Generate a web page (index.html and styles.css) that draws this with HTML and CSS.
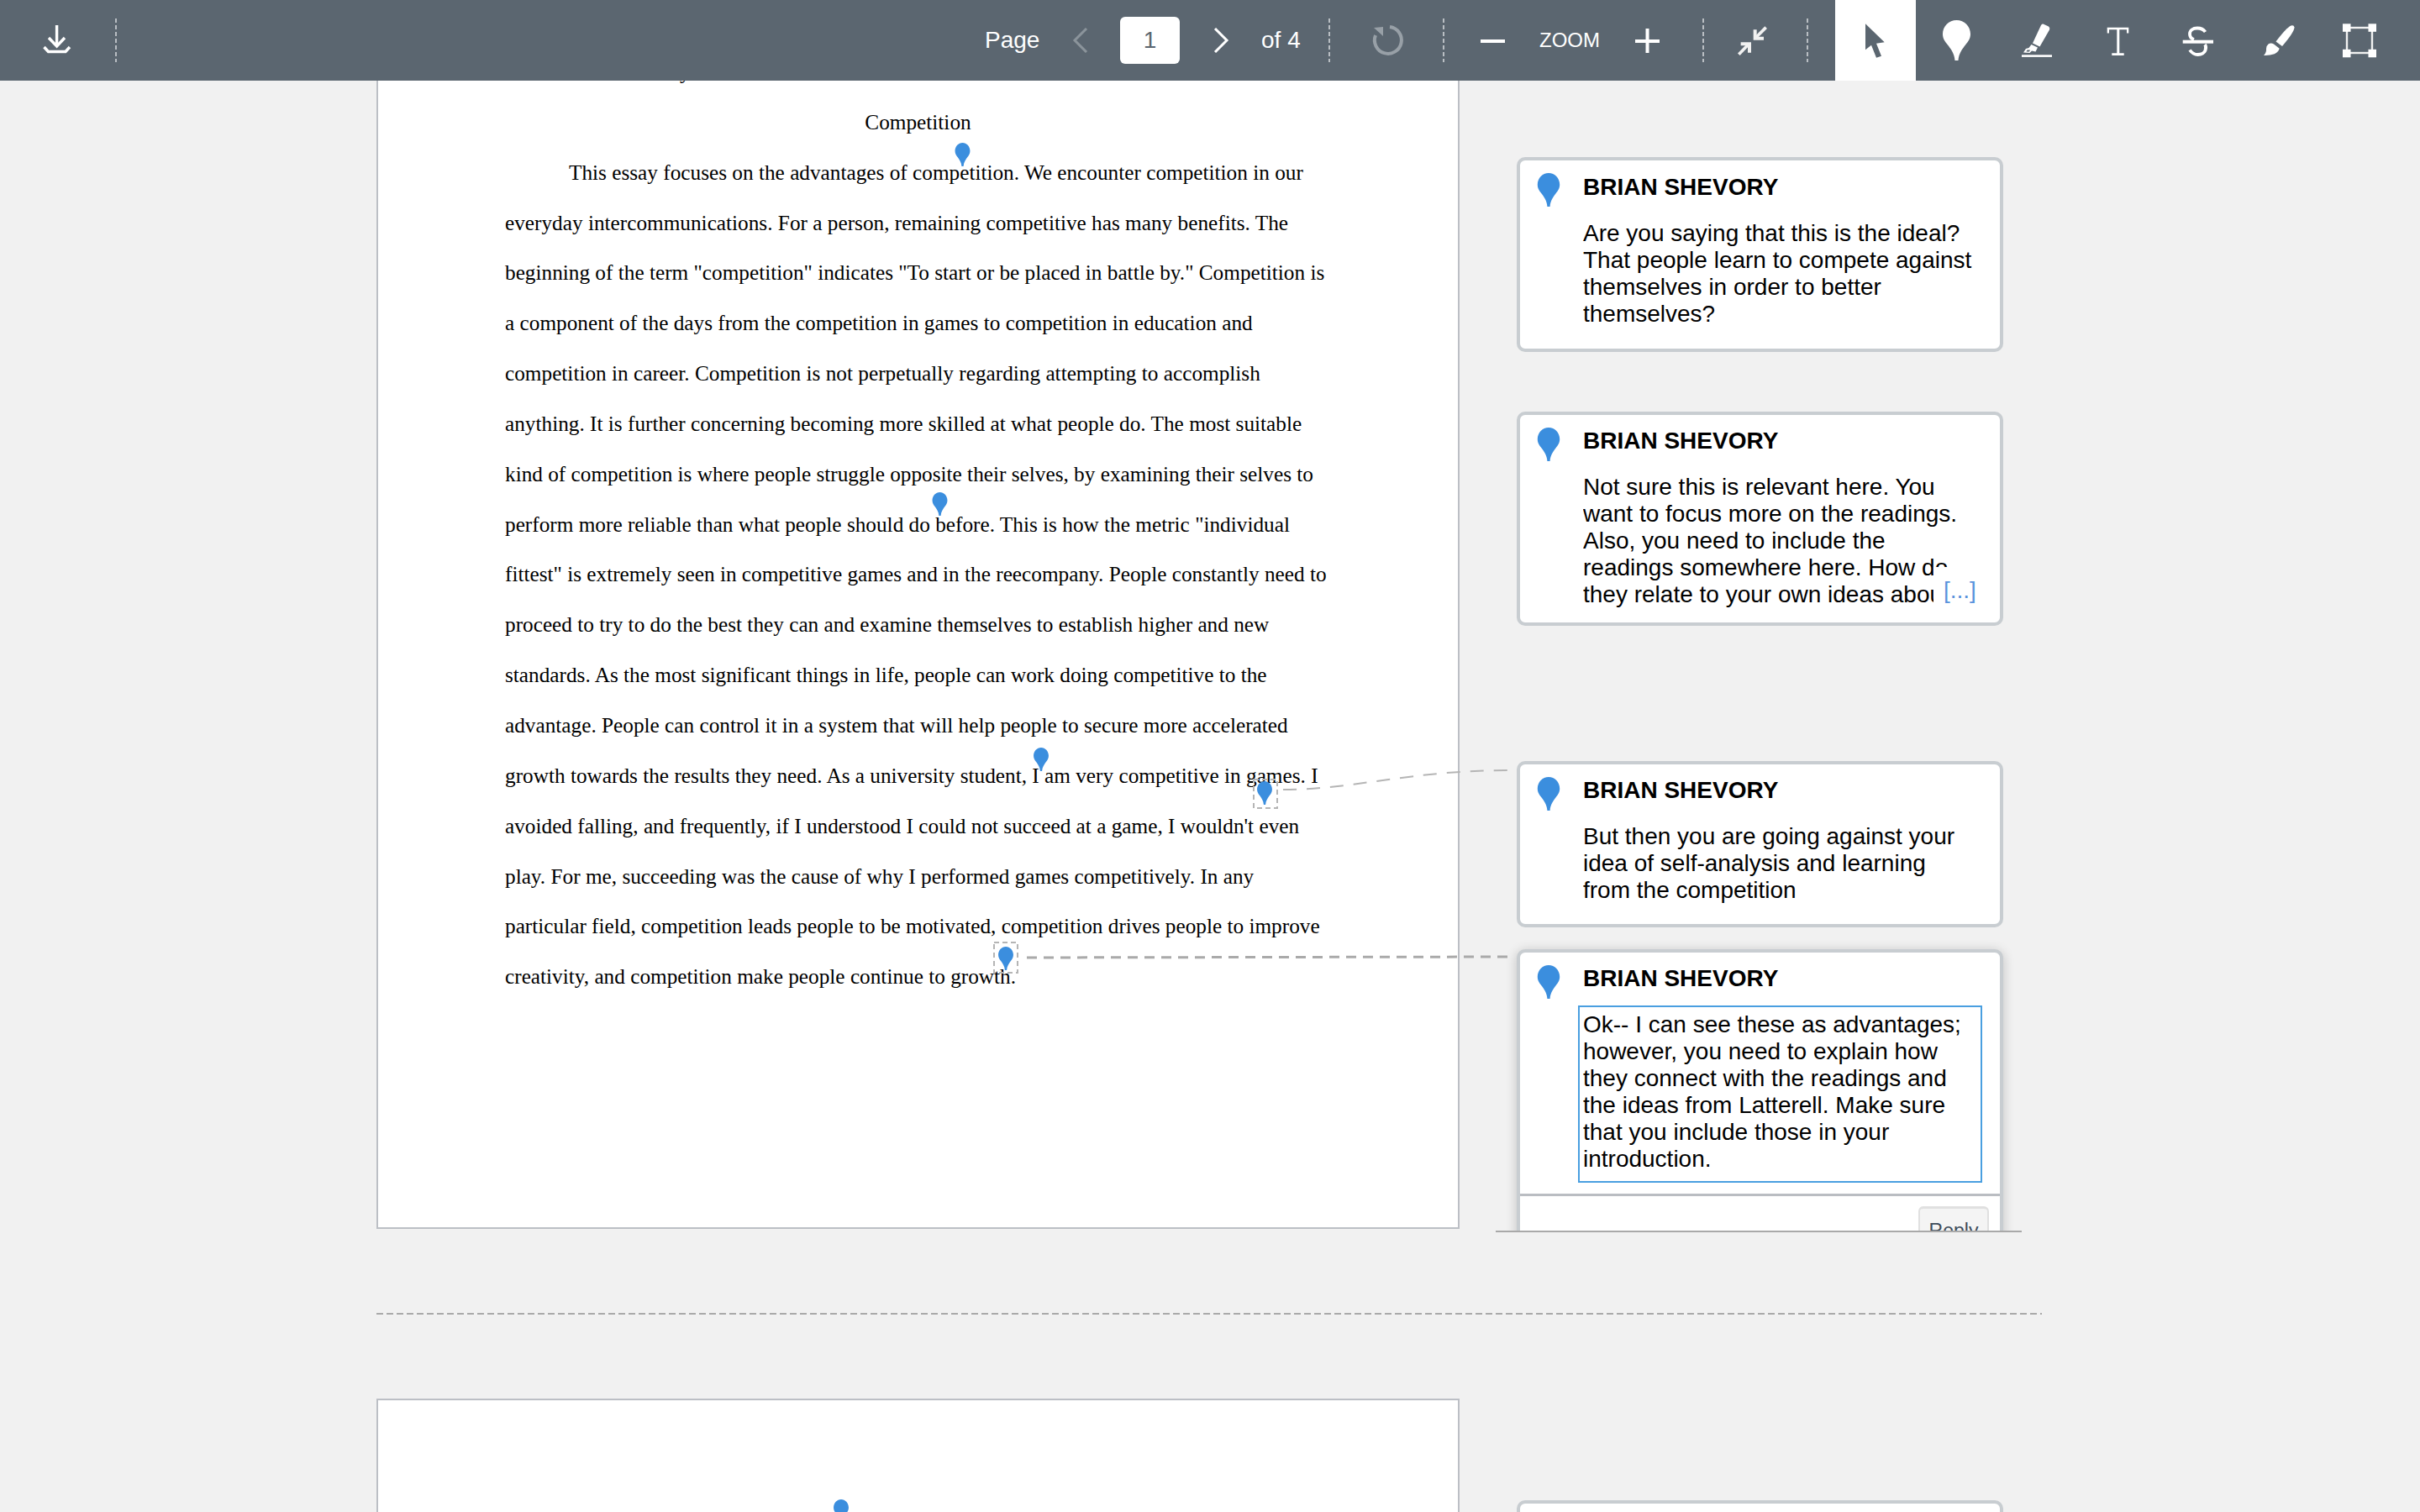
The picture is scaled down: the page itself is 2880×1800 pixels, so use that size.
FILE: index.html
```html
<html>
<head>
<title>Competition</title>
<link rel="stylesheet" href="styles.css">
</head>
<body>
<svg class="iconDefs">
	<symbol id="pin" viewBox="31 24 35 48" preserveAspectRatio="none">
		<path d="M48.5 24C57.6 24 65 31.4 65 40.5C65 46.5 62 49.5 59 53.5C56 57.5 51 63.5 50.5 72H46.5C46 63.5 41 57.5 38 53.5C35 49.5 32 46.5 32 40.5C32 31.4 39.4 24 48.5 24Z"/>
	</symbol>
</svg>

<div id="toolbar">
	<svg class="icon downloadIcon" viewBox="0 0 48 48" fill="none" stroke="#fff" stroke-width="3.4">
		<path d="M23.6 6V30"/>
		<path d="M14 21L23.6 31L33 21"/>
		<path d="M8.500 32L13.500 37.500H34L39 32"/>
	</svg>
	<span class="sep sepFirst"></span>
	<span class="pageLabel">Page</span>
	<svg class="chevron chevronPrev" viewBox="0 0 19 30" fill="none" stroke="#8b949b" stroke-width="3"><path d="M17 1L3 15L17 29"/></svg>
	<span class="pageInput">1</span>
	<svg class="chevron chevronNext" viewBox="0 0 19 30" fill="none" stroke="#fff" stroke-width="3"><path d="M2 1L16 15L2 29"/></svg>
	<span class="pageCount">of 4</span>
	<span class="sep sepCount"></span>
	<svg class="icon rotateIcon" viewBox="0 0 48 48" fill="none" stroke="#98a0a7" stroke-width="4">
		<path d="M26 8A16 16 0 1 1 9 18"/>
		<path d="M7 9L18 8V19Z" fill="#98a0a7" stroke="none"/>
	</svg>
	<span class="sep sepRotate"></span>
	<svg class="zoomBtn zoomMinus" viewBox="0 0 29 29" fill="#fff"><rect y="13" width="29" height="4"/></svg>
	<span class="zoomLabel">ZOOM</span>
	<svg class="zoomBtn zoomPlus" viewBox="0 0 29 29" fill="#fff"><rect y="13" width="29" height="4"/><rect x="12.500" width="4" height="29"/></svg>
	<span class="sep sepZoom"></span>
	<svg class="compressIcon" viewBox="0 0 210 192" fill="#f1f1f1">
		<path d="M110 95H147V83H122V58H110Z"/>
		<path d="M118 87L155 50" stroke="#f1f1f1" stroke-width="11"/>
		<path d="M65 103H102V140H90V115H65Z"/>
		<path d="M94 109L58 146" stroke="#f1f1f1" stroke-width="11"/>
	</svg>
	<span class="sep sepCompress"></span>

	<div class="tools">
		<span class="tool toolActive">
			<svg viewBox="0 0 96 96" fill="#5b6670"><path d="M36 28.300L58.700 50.300L49 51.700L55 66.700L49 68.700L43 53.700L36 59.300Z"/></svg>
		</span>
		<span class="tool">
			<svg viewBox="0 0 96 96" fill="#fff"><path d="M48.500 24C57.600 24 65 31.400 65 40.500C65 46.500 62 49.500 59 53.500C56 57.500 51 63.500 50.500 72H46.500C46 63.500 41 57.500 38 53.500C35 49.500 32 46.500 32 40.500C32 31.400 39.400 24 48.500 24Z"/></svg>
		</span>
		<span class="tool">
			<svg viewBox="0 0 96 96" fill="#fff">
				<path d="M55.500 28.500L62 31.500Q64 33 63 35.500L51.500 55.500L43 51.500L53 30Q54 28 55.500 28.500Z"/>
				<path fill-rule="evenodd" d="M41.500 53L49 56.500L46.500 61.500L42 60.500L39.500 63L32 62.500L35 58L38.500 57ZM36.500 59.500L35.500 61.500L39 61.500L40 59.500Z"/>
				<rect x="30" y="65.300" width="36" height="2.600"/>
			</svg>
		</span>
		<span class="tool">
			<svg viewBox="0 0 96 96" fill="#fff"><path d="M35.700 32.700H61.300V39.500H59V35.200H50.300V63.300H55.700V66H41.300V63.300H47.300V35.200H38V39.500H35.700Z"/></svg>
		</span>
		<span class="tool">
			<svg viewBox="0 0 96 96" fill="none" stroke="#fff" stroke-width="3.800">
				<path d="M56.500 38C54 34.500 50 33.500 47 33.500C41.500 33.500 38 36.500 38 40.500C38 44 40 46 43 47"/>
				<path d="M56 53C57.500 55 57.500 57 56.500 60C55 63.500 51 65 47.500 65C44 65 40.500 63 38 59.500"/>
				<rect x="29.700" y="47.700" width="36.300" height="4" fill="#fff" stroke="none"/>
			</svg>
		</span>
		<span class="tool">
			<svg viewBox="0 0 96 96" fill="#fff">
				<path d="M62.500 30.500Q66 29.500 66.500 32.500Q66.500 38 52 55L44.500 49.500Q57 33 62.500 30.500Z"/>
				<path d="M35.500 52.500Q38.500 50.500 42 52.500L48.700 57.700Q47.500 62 42.700 64.300Q37 66.300 30 66Q33.500 62.500 33 58Q33 54.500 35.500 52.500Z"/>
			</svg>
		</span>
		<span class="tool">
			<svg viewBox="0 0 96 96" fill="#fff">
				<rect x="33" y="33" width="30" height="30" fill="none" stroke="#f1f1f1" stroke-width="2.400"/>
				<rect x="28" y="28.300" width="9.500" height="9.500"/>
				<rect x="58.500" y="28.300" width="9.500" height="9.500"/>
				<rect x="28" y="58.800" width="9.500" height="9.500"/>
				<rect x="58.500" y="58.800" width="9.500" height="9.500"/>
			</svg>
		</span>
	</div>
</div>

<div id="viewer">
	<div class="pageRow pageRowFirst">
		<div class="docPage docPageFirst">
			<div class="docText">
				<div class="docCut">y</div>
				<div class="docTitle">Competition</div>
				<div class="docIndent">This essay focuses on the advantages of competition. We encounter competition in our</div>
				<div>everyday intercommunications. For a person, remaining competitive has many benefits. The</div>
				<div>beginning of the term "competition" indicates "To start or be placed in battle by." Competition is</div>
				<div>a component of the days from the competition in games to competition in education and</div>
				<div>competition in career. Competition is not perpetually regarding attempting to accomplish</div>
				<div>anything. It is further concerning becoming more skilled at what people do. The most suitable</div>
				<div>kind of competition is where people struggle opposite their selves, by examining their selves to</div>
				<div>perform more reliable than what people should do before. This is how the metric "individual</div>
				<div>fittest" is extremely seen in competitive games and in the reecompany. People constantly need to</div>
				<div>proceed to try to do the best they can and examine themselves to establish higher and new</div>
				<div>standards. As the most significant things in life, people can work doing competitive to the</div>
				<div>advantage. People can control it in a system that will help people to secure more accelerated</div>
				<div>growth towards the results they need. As a university student, I am very competitive in games. I</div>
				<div>avoided falling, and frequently, if I understood I could not succeed at a game, I wouldn't even</div>
				<div>play. For me, succeeding was the cause of why I performed games competitively. In any</div>
				<div>particular field, competition leads people to be motivated, competition drives people to improve</div>
				<div>creativity, and competition make people continue to growth.</div>
			</div>
		</div>
		<div class="comments commentsFirst">
			<div class="card cardOne">
				<div class="cardMain">
					<svg class="cardPin"><use href="#pin"/></svg>
					<div class="cardName">BRIAN SHEVORY</div>
					<div class="cardText">Are you saying that this is the ideal? That people learn to compete against themselves in order to better themselves?</div>
				</div>
			</div>
			<div class="card cardTwo">
				<div class="cardMain">
					<svg class="cardPin"><use href="#pin"/></svg>
					<div class="cardName">BRIAN SHEVORY</div>
					<div class="cardText cardClamped">Not sure this is relevant here. You want to focus more on the readings. Also, you need to include the readings somewhere here. How do they relate to your own ideas about
						<span class="moreLink">[...]</span>
					</div>
				</div>
			</div>
			<div class="card cardThree">
				<div class="cardMain">
					<svg class="cardPin"><use href="#pin"/></svg>
					<div class="cardName">BRIAN SHEVORY</div>
					<div class="cardText">But then you are going against your idea of self-analysis and learning from the competition</div>
				</div>
			</div>
			<div class="card cardFour">
				<div class="cardMain">
					<svg class="cardPin"><use href="#pin"/></svg>
					<div class="cardName">BRIAN SHEVORY</div>
					<div class="cardText cardEditing">Ok-- I can see these as advantages; however, you need to explain how they connect with the readings and the ideas from Latterell. Make sure that you include those in your introduction.</div>
				</div>
				<div class="cardFoot"><span class="replyBtn">Reply</span></div>
			</div>
		</div>
	</div>

	<div class="pageDivider"></div>

	<div class="pageRow">
		<div class="docPage docPageNext"></div>
		<div class="comments commentsNext">
			<div class="card cardEmpty"></div>
		</div>
	</div>

	<!-- pins and connectors sit on top of the pages, coordinates are the page's own -->
	<svg class="overlay" viewBox="0 96 2880 1704">
		<path class="connector connectorCurve" d="M1527 940C1610 940 1680 917 1795 917"/>
		<path class="connector" d="M1222 1140L1795 1139"/>
		<rect class="pinBox" x="1492" y="928" width="28" height="34"/>
		<rect class="pinBox" x="1183" y="1122" width="28" height="36"/>
		<use class="docPin" href="#pin" x="1136" y="170" width="19" height="28"/>
		<use class="docPin" href="#pin" x="1109" y="586" width="19" height="28"/>
		<use class="docPin" href="#pin" x="1229.500" y="890" width="19" height="28"/>
		<use class="docPin" href="#pin" x="1495.500" y="930" width="19" height="28"/>
		<use class="docPin" href="#pin" x="1187.500" y="1127" width="19" height="28"/>
		<use class="docPin" href="#pin" x="991.500" y="1785" width="19" height="28"/>
	</svg>
</div>
</body>
</html>
```

FILE: styles.css
```css
html, body
{
	margin: 0;
	padding: 0;
}
body
{
	width: 2880px;
	height: 1800px;
	overflow: hidden;
	background-color: #f1f1f1;
	font-family: "Liberation Sans", Arial, sans-serif;
	color: #000;
}
.iconDefs
{
	position: absolute;
	width: 0;
	height: 0;
}

#toolbar
{
	position: relative;
	z-index: 2;
	display: flex;
	align-items: center;
	height: 96px;
	background-color: #5b6670;
	color: #fff;
	font-size: 28px;
}
.icon
{
	flex: none;
	width: 48px;
	height: 48px;
}
.downloadIcon
{
	margin-left: 44px;
}
.sep
{
	flex: none;
	width: 2px;
	height: 52px;
	background-image: repeating-linear-gradient(#b9bec3 0, #b9bec3 5px, transparent 5px, transparent 8px);
}
.sepFirst { margin-left: 45px; }
.sepCount { margin-left: 33px; }
.sepRotate { margin-left: 41px; }
.sepZoom { margin-left: 51px; }
.sepCompress { margin-left: 30px; }
.pageLabel
{
	flex: none;
	width: 65px;
	margin-left: 1033px;
}
.chevron
{
	flex: none;
	width: 19px;
	height: 30px;
}
.chevronPrev { margin-left: 39px; }
.chevronNext { margin-left: 40px; }
.pageInput
{
	flex: none;
	width: 71px;
	height: 56px;
	margin-left: 38px;
	border-radius: 6px;
	background-color: #fff;
	color: #5b6670;
	line-height: 56px;
	text-align: center;
}
.pageCount
{
	flex: none;
	width: 47px;
	margin-left: 38px;
}
.rotateIcon { margin-left: 45px; }
.zoomBtn
{
	flex: none;
	width: 29px;
	height: 29px;
}
.zoomMinus { margin-left: 43px; }
.zoomPlus { margin-left: 42px; }
.zoomLabel
{
	flex: none;
	width: 72px;
	margin-left: 41px;
	font-size: 24px;
}
.compressIcon
{
	flex: none;
	width: 70px;
	height: 64px;
	margin-left: 22px;
}
.tools
{
	display: flex;
	margin-left: 32px;
}
.tool
{
	width: 96px;
	height: 96px;
}
.tool svg
{
	display: block;
	width: 96px;
	height: 96px;
}
.toolActive
{
	background-color: #fff;
}

#viewer
{
	position: relative;
	height: 1704px;
	padding-left: 448px;
	overflow: hidden;
}
.pageRow
{
	display: flex;
	align-items: flex-start;
}
.docPage
{
	box-sizing: border-box;
	flex: none;
	width: 1289px;
	background-color: #fff;
	border: 2px solid #bcbfc5;
}
.docPageFirst
{
	height: 1367px;
	border-top: 0;
	overflow: hidden;
}
.docPageNext
{
	height: 800px;
	border-bottom: 0;
}
.docText
{
	margin-top: -40px;
	padding-left: 151px;
	font-family: "Liberation Serif", "Times New Roman", serif;
	font-size: 25.28px;
	line-height: 59.85px;
	white-space: nowrap;
}
.docCut
{
	padding-left: 208px;
}
.docTitle
{
	text-align: center;
	margin-left: -151px;
}
.docIndent
{
	padding-left: 76px;
}

.comments
{
	box-sizing: border-box;
	flex: none;
	width: 626px;
	margin-left: 43px;
	padding-left: 25px;
	overflow: hidden;
}
.commentsFirst
{
	height: 1371px;
	padding-top: 91px;
	border-bottom: 2px solid #a9a9a9;
}
.commentsNext
{
	height: 300px;
	padding-top: 121px;
}
.card
{
	box-sizing: border-box;
	width: 579px;
	background-color: #fff;
	border: 4px solid #c8cdd1;
	border-radius: 10px;
}
.cardTwo { margin-top: 71px; height: 255px; }
.cardThree { margin-top: 161px; }
.cardFour
{
	margin-top: 26px;
	box-shadow: 0 2px 14px rgba(0, 0, 0, 0.2);
}
.cardEmpty { height: 200px; }
.cardMain
{
	display: grid;
	grid-template-columns: 28px 1fr;
	column-gap: 27px;
	padding: 15px 20px 26px 20px;
}
.cardOne .cardMain { padding: 16px 20px 25px 20px; }
.cardOne .cardPin { margin-top: -1px; }
.cardThree .cardMain { padding-bottom: 24px; }
.cardFour .cardMain { padding-bottom: 13px; }
.cardPin
{
	grid-row: 1 / 3;
	width: 28px;
	height: 40px;
	fill: #3b8ede;
}
.cardName
{
	font-size: 28px;
	font-weight: bold;
	line-height: 32px;
}
.cardText
{
	margin-top: 23px;
	padding-right: 12px;
	font-size: 28px;
	line-height: 32px;
}
.cardClamped
{
	position: relative;
	height: 160px;
	overflow: hidden;
}
.moreLink
{
	position: absolute;
	top: 111px;
	right: 0;
	width: 47px;
	height: 49px;
	padding: 12px 0 0 12px;
	box-sizing: content-box;
	background-color: #fff;
	color: #5a93dc;
	font-size: 28px;
}
.cardEditing
{
	margin: 16px 0 0 -6px;
	width: 481px;
	box-sizing: border-box;
	padding: 5px 4px 10px 4px;
	border: 2px solid #4a9fe0;
}
.cardFoot
{
	display: flex;
	justify-content: flex-end;
	padding: 12px 13px 16px 0;
	border-top: 3px solid #babdc2;
}
.replyBtn
{
	box-sizing: border-box;
	width: 84px;
	height: 56px;
	border: 2px solid #e0e0e0;
	border-top-width: 3px;
	border-radius: 6px;
	background-color: #f4f4f4;
	color: #3d4b59;
	font-size: 23px;
	line-height: 40px;
	padding-top: 6px;
	text-align: center;
}

.pageDivider
{
	width: 1982px;
	height: 2px;
	margin: 96px 0 100px 0;
	background-image: repeating-linear-gradient(90deg, #aaa 0, #aaa 8px, transparent 8px, transparent 12px);
}

.overlay
{
	position: absolute;
	left: 0;
	top: 0;
	width: 2880px;
	height: 1704px;
	pointer-events: none;
}
.connector
{
	fill: none;
	stroke: #aaa;
	stroke-width: 3;
	stroke-dasharray: 12 8;
}
.connectorCurve
{
	stroke: #b5b5b5;
	stroke-width: 2;
	stroke-dasharray: 16 12;
}
.pinBox
{
	fill: none;
	stroke: #b5b5b5;
	stroke-width: 2;
	stroke-dasharray: 6 4;
}
.docPin
{
	fill: #3b8ede;
}
```
